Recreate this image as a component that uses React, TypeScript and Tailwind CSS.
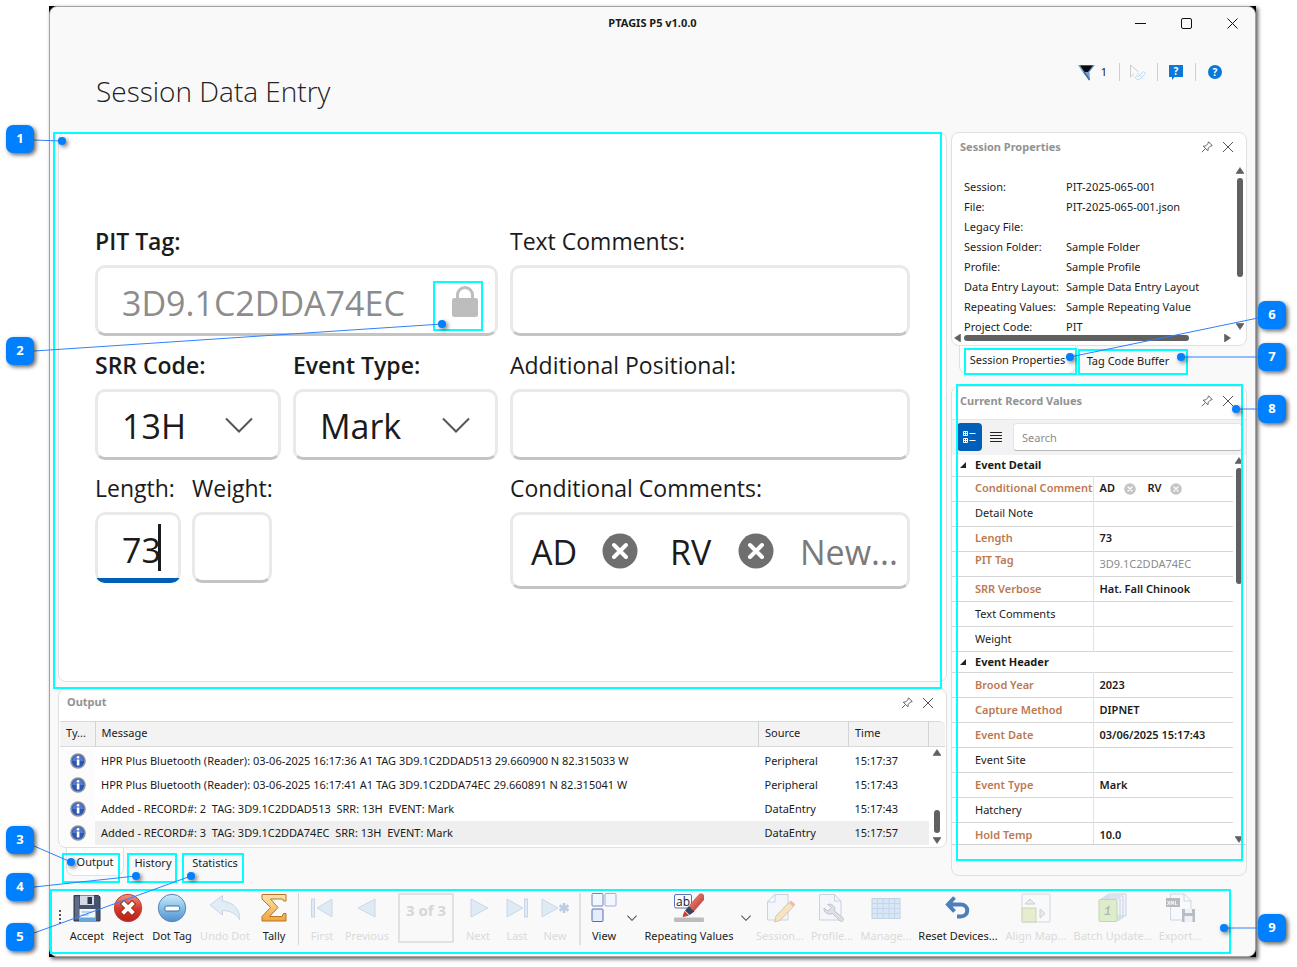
import React from 'react';
import { clsx } from 'clsx';

interface SessionProperty {
    label: string;
    value: string;
}

interface OutputRow {
    message: string;
    source: string;
    time: string;
}

interface RecordField {
    name: string;
    value?: string;
    required?: boolean;
    kind?: 'tokens' | 'locked';
}

const sessionProperties: SessionProperty[] = [
    { label: 'Session:', value: 'PIT-2025-065-001' },
    { label: 'File:', value: 'PIT-2025-065-001.json' },
    { label: 'Legacy File:', value: '' },
    { label: 'Session Folder:', value: 'Sample Folder' },
    { label: 'Profile:', value: 'Sample Profile' },
    { label: 'Data Entry Layout:', value: 'Sample Data Entry Layout' },
    { label: 'Repeating Values:', value: 'Sample Repeating Value' },
    { label: 'Project Code:', value: 'PIT' },
];

const outputRows: OutputRow[] = [
    { message: 'HPR Plus Bluetooth (Reader): 03-06-2025 16:17:36 A1 TAG 3D9.1C2DDAD513 29.660900 N 82.315033 W', source: 'Peripheral', time: '15:17:37' },
    { message: 'HPR Plus Bluetooth (Reader): 03-06-2025 16:17:41 A1 TAG 3D9.1C2DDA74EC 29.660891 N 82.315041 W', source: 'Peripheral', time: '15:17:43' },
    { message: 'Added - RECORD#: 2  TAG: 3D9.1C2DDAD513  SRR: 13H  EVENT: Mark', source: 'DataEntry', time: '15:17:43' },
    { message: 'Added - RECORD#: 3  TAG: 3D9.1C2DDA74EC  SRR: 13H  EVENT: Mark', source: 'DataEntry', time: '15:17:57' },
];

const eventDetail: RecordField[] = [
    { name: 'Conditional Comment', required: true, kind: 'tokens' },
    { name: 'Detail Note' },
    { name: 'Length', value: '73', required: true },
    { name: 'PIT Tag', value: '3D9.1C2DDA74EC', required: true, kind: 'locked' },
    { name: 'SRR Verbose', value: 'Hat. Fall Chinook', required: true },
    { name: 'Text Comments' },
    { name: 'Weight' },
];

const eventHeader: RecordField[] = [
    { name: 'Brood Year', value: '2023', required: true },
    { name: 'Capture Method', value: 'DIPNET', required: true },
    { name: 'Event Date', value: '03/06/2025 15:17:43', required: true },
    { name: 'Event Site' },
    { name: 'Event Type', value: 'Mark', required: true },
    { name: 'Hatchery' },
    { name: 'Hold Temp', value: '10.0', required: true },
];

/* ---------- small glyphs ---------- */

const PinIcon = () => (
    <svg width="12" height="12" viewBox="0 0 12 12" fill="none" stroke="#666" strokeWidth="1">
        <path d="M7.5.8l3.7 3.7-2.1.8-1.8 1.9-.4 2.6L2.3 5.200l2.600-.4 1.900-1.900zM4.400 7.600L.8 11.200" />
    </svg>
);

const CloseIcon = () => (
    <svg width="12" height="12" viewBox="0 0 12 12" fill="none" stroke="#555" strokeWidth="1">
        <path d="M1 1l10 10M11 1L1 11" />
    </svg>
);

const Triangle = ({ dir }: { dir: 'up' | 'down' | 'left' | 'right' }) => {
    const paths = {
        up: 'M4 0.500L8 6.500H0z',
        down: 'M0 .5h8L4 6.500z',
        left: 'M6.500 0v8L.5 4z',
        right: 'M.5 0v8l6-4z',
    };
    return (
        <svg width="8" height="8" viewBox="0 0 8 8" className="shrink-0">
            <path d={paths[dir]} fill="#606060" stroke="#606060" strokeWidth=".6" strokeLinejoin="round" />
        </svg>
    );
};

const ChevronDown = ({ className }: { className?: string }) => (
    <svg viewBox="0 0 28 16" className={className} fill="none" stroke="#555" strokeWidth="2">
        <path d="M1 1.500l13 13 13-13" />
    </svg>
);

const TokenRemove = ({ className, fill }: { className: string; fill: string }) => (
    <svg viewBox="0 0 36 36" className={className}>
        <circle cx="18" cy="18" r="17.500" fill={fill} />
        <path d="M12 12l12 12M24 12l-12 12" stroke="#fff" strokeWidth="4" strokeLinecap="round" />
    </svg>
);

const InfoIcon = () => (
    <svg width="16" height="16" viewBox="0 0 16 16" className="block">
        <circle cx="8" cy="8" r="7.800" fill="#8d929c" />
        <circle cx="8" cy="8" r="6.200" fill="#2c55b8" />
        <path d="M2.300 8a5.700 5.700 0 0 1 11.400 0z" fill="#5579cc" />
        <rect x="6.800" y="3" width="2.600" height="2.400" rx="1" fill="#fff" />
        <rect x="6.800" y="6.400" width="2.600" height="6.200" rx=".6" fill="#fff" />
    </svg>
);

/* ---------- toolbar icons ---------- */

const Icon = ({ children, faded }: { children: React.ReactNode; faded?: boolean }) => (
    <svg width="30" height="30" viewBox="0 0 30 30" fill="none" className={clsx('block', faded && 'opacity-40')}>
        {children}
    </svg>
);

const AcceptIcon = () => (
    <Icon>
        <path d="M2 2.500h24.500l1.500 1.500v24H2z" fill="#46536b" stroke="#2f3a50" />
        <path d="M3 3.500h4v23H3z" fill="#5f6d86" />
        <rect x="8" y="2.500" width="14" height="9.500" fill="#d4dbe6" />
        <rect x="15.500" y="4" width="4.500" height="7" fill="#2d374c" />
        <rect x="7.500" y="16" width="16" height="12" fill="#f3f8fd" />
        <path d="M7.500 24.500h16V28h-16z" fill="#64a8dc" />
        <path d="M9.500 19h10M9.500 22h7" stroke="#8fb0d0" />
    </Icon>
);

const RejectIcon = () => (
    <Icon>
        <defs>
            <linearGradient id="reject" x1="0" y1="0" x2="0" y2="1">
                <stop offset="0" stopColor="#ee9a8b" />
                <stop offset=".5" stopColor="#d83b2b" />
                <stop offset="1" stopColor="#b51f17" />
            </linearGradient>
        </defs>
        <circle cx="15" cy="15" r="13.700" fill="url(#reject)" stroke="#bd4438" />
        <path d="M11 11l8 8M19 11l-8 8" stroke="#a3281f" strokeWidth="6" strokeLinecap="square" />
        <path d="M11 11l8 8M19 11l-8 8" stroke="#fff" strokeWidth="4" strokeLinecap="square" />
    </Icon>
);

const DotTagIcon = () => (
    <Icon>
        <defs>
            <linearGradient id="dot" x1="0" y1="0" x2="0" y2="1">
                <stop offset="0" stopColor="#cfecf8" />
                <stop offset=".5" stopColor="#87c0e6" />
                <stop offset="1" stopColor="#4f8fcd" />
            </linearGradient>
        </defs>
        <circle cx="15" cy="15" r="13.700" fill="url(#dot)" stroke="#5b86b8" />
        <rect x="8" y="13" width="14.500" height="5" rx="1.500" fill="#fff" stroke="#3d70a8" />
    </Icon>
);

const UndoIcon = () => (
    <Icon faded>
        <path d="M0 12L12.500 2.500v5.500C22 9 30 15 30 27c-4-6.500-10-9.500-17.500-9.500v4.500z" fill="#bfdcf0" stroke="#7f9cc8" strokeLinejoin="round" />
    </Icon>
);

const TallyIcon = () => (
    <Icon>
        <defs>
            <linearGradient id="tally" x1="0" y1="0" x2="0" y2="1">
                <stop offset="0" stopColor="#fde3ae" />
                <stop offset="1" stopColor="#f0a63c" />
            </linearGradient>
        </defs>
        <path d="M3 1.500h24v6.500h-2.500l-1-2H11.500L19 14.500 10.500 23.500H23l1.500-3H27v7.500H3v-4.500l8.500-9L3 6z" fill="url(#tally)" stroke="#b9742a" strokeLinejoin="round" />
    </Icon>
);

const FirstIcon = () => (
    <Icon faded>
        <rect x="4.500" y="6" width="3" height="18" fill="#b8d8f0" stroke="#86a2cc" />
        <path d="M25 6v18L10 15z" fill="#b8d8f0" stroke="#86a2cc" />
    </Icon>
);

const PreviousIcon = () => (
    <Icon faded>
        <path d="M23 6v18L6 15z" fill="#b8d8f0" stroke="#86a2cc" />
    </Icon>
);

const NextIcon = () => (
    <Icon faded>
        <path d="M8 6v18l17-9z" fill="#b8d8f0" stroke="#86a2cc" />
    </Icon>
);

const LastIcon = () => (
    <Icon faded>
        <rect x="22.500" y="6" width="3" height="18" fill="#b8d8f0" stroke="#86a2cc" />
        <path d="M5 6v18l16-9z" fill="#b8d8f0" stroke="#86a2cc" />
    </Icon>
);

const NewIcon = () => (
    <Icon faded>
        <path d="M2 6v18l16-9z" fill="#b8d8f0" stroke="#86a2cc" />
        <path d="M24 10v10M19.500 12.500l9 5M28.500 12.500l-9 5" stroke="#5f8bc4" strokeWidth="2.600" />
    </Icon>
);

const ViewIcon = () => (
    <Icon>
        <rect x="3" y=".5" width="11" height="12.500" rx="1" fill="#f2f6ff" stroke="#7484b8" />
        <rect x="16" y=".5" width="11" height="12.500" rx="1" fill="#f2f6ff" stroke="#a3aed2" />
        <rect x="3" y="16" width="11" height="12.500" rx="1" fill="#e4ecff" stroke="#5a6cab" />
    </Icon>
);

const RepeatingIcon = () => (
    <Icon>
        <defs>
            <linearGradient id="marker" x1="0" y1="0" x2="1" y2="1">
                <stop offset="0" stopColor="#f59a8c" />
                <stop offset="1" stopColor="#b4211d" />
            </linearGradient>
        </defs>
        <rect x="0" y="24.500" width="30" height="4.500" rx="1" fill="#bdbdbd" />
        <rect x=".5" y="1.500" width="17" height="13.500" rx="1.500" fill="#f7faff" stroke="#5a74b4" />
        <text x="2" y="12.500" fontSize="12" fill="#222" className="font-['Open_Sans',sans-serif]">ab</text>
        <path d="M15.500 12.500L25 1.500c2.500-2.500 7.500 1.500 5 5L20 18z" fill="url(#marker)" stroke="#b33a30" strokeWidth=".5" />
        <path d="M15 13l5.500 5.500-5 3.500-4.500-4.500z" fill="#39435a" />
        <path d="M10.500 18l4.500 4.500-5.500 1.500c-1 0-1-1-.5-2z" fill="#d23c30" />
    </Icon>
);

const SessionIcon = () => (
    <Icon faded>
        <path d="M10 1.500h13V27H2.500V9z" fill="#eef3fa" stroke="#8497c2" />
        <path d="M10 1.500V9H2.500z" fill="#fff" stroke="#8497c2" />
        <path d="M11 23L24 9.500l4.500 4L15 27.500 9.500 29z" fill="#f3c36a" stroke="#a87535" />
        <path d="M24 9.500l2-2 4.500 4-2 2z" fill="#e0604f" />
    </Icon>
);

const ProfileIcon = () => (
    <Icon faded>
        <path d="M2.500 1.500h15L24 8v19H2.500z" fill="#eef3fa" stroke="#8497c2" />
        <path d="M17.500 1.500V8H24" stroke="#8497c2" />
        <path d="M10.500 11.500c4-1.500 8.500 2 7 6.500l8.500 7c1.500 2-1 4.500-3 3L15.500 20.500c-4.500 2-9-1-8.500-5.500l4 3 3.500-3.500z" fill="#b5bdc9" stroke="#6b7688" />
    </Icon>
);

const ManageIcon = () => (
    <Icon faded>
        <rect x="1" y="5.500" width="28" height="20" fill="#a9cdf0" stroke="#6f96cc" />
        <path d="M1 10.500h28M1 15.500h28M1 20.500h28M6.500 5.500v20M12 5.500v20M18 5.500v20M23.500 5.500v20" stroke="#7ba2d4" />
    </Icon>
);

const ResetIcon = () => (
    <Icon>
        <path d="M11.500 4.500L5 11.500l6.500 7M6 11.500h11.500c9 0 9 12 0 12H14" stroke="#4a80bb" strokeWidth="4" />
    </Icon>
);

const AlignIcon = () => (
    <Icon faded>
        <rect x="1" y="1" width="28" height="28" rx="1" fill="#f8fafc" stroke="#9aa5b5" />
        <rect x="1" y="15" width="14" height="14" fill="#c5dd8c" stroke="#8ca25c" />
        <path d="M9 6l5 5H4zM19 16v9l5-4.500z" fill="#d8d8d8" stroke="#8c8c8c" />
    </Icon>
);

const BatchIcon = () => (
    <Icon faded>
        <path d="M10 1h18v22H10zM7 3h18v22H7zM4 5h18v22H4z" fill="#e6eefc" stroke="#7e98c8" />
        <rect x="1" y="6.500" width="18" height="22" rx="1" fill="#b5dc84" stroke="#73a048" />
        <text x="6" y="22" fontSize="12" fontStyle="italic" fontWeight="700" fill="#4c5a44" className="font-['Liberation_Mono',monospace]">1</text>
    </Icon>
);

const ExportIcon = () => (
    <Icon faded>
        <path d="M5.500 1h14L26 7.500V27H5.500z" fill="#f7faff" stroke="#8fa0c8" />
        <path d="M19 1v7h7" stroke="#8fa0c8" />
        <rect x="1" y="5" width="14" height="9" fill="#555d68" />
        <text x="2" y="12" fontSize="6" fontWeight="700" fill="#fff" className="font-['Liberation_Mono',monospace]">XML</text>
        <path d="M17 16h13v13H17z" fill="#56647d" />
        <path d="M20 16h7v4h-7zM19.500 23h8v6h-8z" fill="#dfe8f3" />
    </Icon>
);

/* ---------- shared pieces ---------- */

const PanelHeader = ({ title }: { title: string }) => (
    <div className="flex h-8 shrink-0 items-center justify-between pb-1 pl-2 pr-3">
        <h2 className="text-[11px] font-bold text-[#929292]">{title}</h2>
        <div className="flex items-center gap-[9px]">
            <button type="button" aria-label={`Pin ${title}`}><PinIcon /></button>
            <button type="button" aria-label={`Close ${title}`}><CloseIcon /></button>
        </div>
    </div>
);

const fieldBox = 'h-[71px] w-full rounded-[10px] border-[3px] border-[#e9e9e9] border-b-[#c4c4c4] bg-white pt-1';
const labelText = 'block h-8 text-[23px] leading-8 whitespace-nowrap mb-2';

const SelectField = ({ id, label, value }: { id: string; label: string; value: string }) => (
    <div>
        <label htmlFor={id} className={clsx(labelText, 'font-semibold')}>{label}</label>
        <div className="relative">
            <select id={id} defaultValue={value} className={clsx(fieldBox, 'appearance-none pl-6 text-[34px] outline-none')}>
                <option>{value}</option>
            </select>
            <ChevronDown className="pointer-events-none absolute right-7 top-7 h-4 w-7" />
        </div>
    </div>
);

interface ToolButtonProps {
    label: string;
    icon: React.ReactNode;
    width: string;
    disabled?: boolean;
}

const ToolButton = ({ label, icon, width, disabled }: ToolButtonProps) => (
    <button
        type="button"
        disabled={disabled}
        className={clsx('flex shrink-0 flex-col items-center gap-[5px] text-[11px] leading-4 whitespace-nowrap', width, disabled ? 'text-[#dadada]' : 'text-[#1b1b1b]')}
    >
        {icon}
        <span className="-mx-4">{label}</span>
    </button>
);

const DropButton = ({ label }: { label: string }) => (
    <button type="button" aria-label={label} className="flex w-5 shrink-0 items-start justify-center pt-[22px]">
        <ChevronDown className="h-[6px] w-[10px] [stroke-width:3]" />
    </button>
);

const Tab = ({ label, active, width }: { label: string; active?: boolean; width: string }) => (
    <button
        type="button"
        role="tab"
        aria-selected={!!active}
        className={clsx('h-7 pt-[2px] text-center text-[11px] whitespace-nowrap', width, active && 'rounded-b-lg border border-t-0 border-[#e0e0e0] bg-white')}
    >
        {label}
    </button>
);

/* ---------- panels ---------- */

const TitleBar = () => (
    <div className="flex h-8 items-center">
        <div className="w-[138px]" />
        <div className="flex-1 text-center text-[11px] font-bold">PTAGIS P5 v1.0.0</div>
        <button type="button" aria-label="Minimize" className="flex h-8 w-[46px] items-center justify-center">
            <svg width="11" height="11" stroke="#111"><path d="M0 5.500h11" /></svg>
        </button>
        <button type="button" aria-label="Maximize" className="flex h-8 w-[46px] items-center justify-center">
            <svg width="11" height="11" stroke="#111" fill="none"><rect x=".5" y=".5" width="10" height="10" rx="1.500" /></svg>
        </button>
        <button type="button" aria-label="Close" className="flex h-8 w-[46px] items-center justify-center">
            <svg width="11" height="11" stroke="#111"><path d="M.5.5l10 10M10.500.5l-10 10" /></svg>
        </button>
    </div>
);

const PageHeader = () => (
    <header className="flex h-[93px] items-start justify-between pl-[46px] pr-[33px] pt-6">
        <h1 className="pt-2 text-[28px] leading-10 font-light text-[#222] font-['Open_Sans',sans-serif]">Session Data Entry</h1>
        <div className="flex h-[18px] items-center">
            <button type="button" className="flex items-center gap-[6px] text-[11px]">
                <svg width="17" height="17" viewBox="0 0 17 17">
                    <path d="M0 1h17l-5.500 7 .5 8.500L5 8.500z" fill="#6ca0d4" />
                    <path d="M2 1.500h13L10 8H6.500z" fill="#0a0a12" />
                    <path d="M6 8l5.500 8" stroke="#46698e" strokeWidth="1.500" />
                </svg>
                <span>1</span>
            </button>
            <span className="ml-3 mr-[10px] h-[18px] w-px bg-[#cfcfcf]" />
            <button type="button" disabled aria-label="Design">
                <svg width="16" height="17" viewBox="0 0 16 17" fill="none" stroke="#cdcdcd">
                    <path d="M.5 1v12l3.500-3M.5 1l8 7" />
                    <path d="M5 13.500c1.500-2 2-2 3.500-1l5-5 2 2-5 5c-1.500 1.500-4 1.500-5.500-1zM7 9l6 6" stroke="#c3d5e9" />
                </svg>
            </button>
            <span className="mx-[11px] h-[18px] w-px bg-[#cfcfcf]" />
            <button type="button" aria-label="Feedback">
                <svg width="14" height="15" viewBox="0 0 14 15">
                    <path d="M0 0h14v12H5.500L3 15v-3H0z" fill="#0a78d6" />
                    <text x="7" y="10" textAnchor="middle" fontSize="10" fontWeight="700" fill="#fff">?</text>
                </svg>
            </button>
            <span className="mx-3 h-[18px] w-px bg-[#cfcfcf]" />
            <button type="button" aria-label="Help">
                <svg width="14" height="14" viewBox="0 0 14 14">
                    <circle cx="7" cy="7" r="7" fill="#0a78d6" />
                    <text x="7" y="10.500" textAnchor="middle" fontSize="10" fontWeight="700" fill="#fff">?</text>
                </svg>
            </button>
        </div>
    </header>
);

const EntryForm = () => (
    <section className="flex-1 rounded-lg border border-[#e0e0e0] bg-white pl-9 pr-9 pt-[92px] font-['Open_Sans',sans-serif]">
        <form className="grid grid-cols-[403fr_400fr] gap-x-3 gap-y-3">
            <div>
                <label htmlFor="pit" className={clsx(labelText, 'font-semibold')}>PIT Tag:</label>
                <div className="relative">
                    <input id="pit" readOnly defaultValue="3D9.1C2DDA74EC" className={clsx(fieldBox, 'pl-6 text-[34px] text-[#8c8c8c]')} />
                    <svg viewBox="0 0 26 32" className="absolute right-5 top-[21px] h-8 w-[26px]">
                        <path d="M5.500 13V9a7.500 7.500 0 0 1 15 0v4" fill="none" stroke="#bdbdbd" strokeWidth="3" />
                        <rect x="0" y="12" width="26" height="19" rx="2.500" fill="#bdbdbd" />
                    </svg>
                </div>
            </div>
            <div>
                <label htmlFor="text-comments" className={labelText}>Text Comments:</label>
                <input id="text-comments" className={clsx(fieldBox, 'px-6 text-[34px]')} />
            </div>
            <div className="grid grid-cols-[186fr_205fr] gap-3 pt-px">
                <SelectField id="srr" label="SRR Code:" value="13H" />
                <SelectField id="event-type" label="Event Type:" value="Mark" />
            </div>
            <div className="pt-px">
                <label htmlFor="positional" className={labelText}>Additional Positional:</label>
                <input id="positional" className={clsx(fieldBox, 'px-6 text-[34px]')} />
            </div>
            <div className="flex gap-[11px]">
                <div className="w-[86px]">
                    <label htmlFor="length" className={labelText}>Length:</label>
                    <div className="relative overflow-hidden rounded-[10px]">
                        <input id="length" defaultValue="73" className={clsx(fieldBox, 'block pl-6 text-[34px] outline-none')} />
                        <span className="absolute inset-x-0 bottom-0 h-[5px] bg-[#0060b9]" />
                        <span className="absolute left-[63px] top-3 h-[47px] w-[3px] bg-[#1b1b1b]" />
                    </div>
                </div>
                <div className="w-20">
                    <label htmlFor="weight" className={labelText}>Weight:</label>
                    <input id="weight" className={clsx(fieldBox, 'px-4 text-[34px]')} />
                </div>
            </div>
            <div>
                <label htmlFor="conditional" className={labelText}>Conditional Comments:</label>
                <div className="flex h-[77px] items-center rounded-[10px] border-[3px] border-[#e9e9e9] border-b-[#c4c4c4] pl-[18px] text-[34px]">
                    <span className="w-[71px] pt-1">AD</span>
                    <button type="button" aria-label="Remove AD"><TokenRemove className="size-9" fill="#6f6f6f" /></button>
                    <span className="ml-8 w-[68px] pt-1">RV</span>
                    <button type="button" aria-label="Remove RV"><TokenRemove className="size-9" fill="#6f6f6f" /></button>
                    <input id="conditional" placeholder="New..." className="ml-[26px] w-full min-w-0 flex-1 pt-1 outline-none placeholder:text-[#7a7a7a]" />
                </div>
            </div>
        </form>
    </section>
);

const OutputPanel = () => (
    <div className="mt-[6px]">
        <section className="rounded-lg border border-[#e0e0e0] bg-white">
            <PanelHeader title="Output" />
            <div className="mx-px flex pb-[2px]">
                <table className="flex-1 table-fixed text-left text-[11px]">
                    <colgroup>
                        <col className="w-[35px]" />
                        <col />
                        <col className="w-[90px]" />
                        <col className="w-20" />
                    </colgroup>
                    <thead>
                        <tr className="h-[25px] border-y border-[#dadada] bg-[#f3f3f3]">
                            <th className="border-r border-[#d4d4d4] pl-[6px] font-normal">Ty...</th>
                            <th className="border-r border-[#d4d4d4] pl-[6px] font-normal">Message</th>
                            <th className="border-r border-[#d4d4d4] pl-[6px] font-normal">Source</th>
                            <th className="border-r border-[#d4d4d4] pl-[6px] font-normal">Time</th>
                        </tr>
                    </thead>
                    <tbody>
                        <tr className="h-[3px]"><td colSpan={4} /></tr>
                        {outputRows.map((row, index) => (
                            <tr key={row.message} className={clsx('h-6', index === 3 && 'bg-[#efefef]')}>
                                <td className="bg-[#fcfcfc] pl-[10px]"><InfoIcon /></td>
                                <td className="pl-[6px] whitespace-pre">{row.message}</td>
                                <td className="pl-[6px]">{row.source}</td>
                                <td className="pl-[6px]">{row.time}</td>
                            </tr>
                        ))}
                    </tbody>
                </table>
                <div className="flex w-4 flex-col">
                    <div className="h-[26px] rounded-tr-md border-y border-[#dadada] bg-[#f3f3f3]" />
                    <div className="flex flex-1 flex-col items-center justify-between pt-[2px]">
                        <Triangle dir="up" />
                        <div className="mt-auto mb-1 h-[23px] w-[6px] rounded-full bg-[#606060]" />
                        <Triangle dir="down" />
                    </div>
                </div>
            </div>
        </section>
        <div role="tablist" className="flex pl-2">
            <Tab label="Output" active width="w-[58px]" />
            <Tab label="History" width="w-[58px]" />
            <Tab label="Statistics" width="w-[66px]" />
        </div>
    </div>
);

const SessionPropertiesPanel = () => (
    <div>
        <section className="flex h-[214px] flex-col rounded-lg border border-[#e0e0e0] bg-white">
            <PanelHeader title="Session Properties" />
            <div className="flex min-h-0 flex-1">
                <div className="min-w-0 flex-1 pl-3 pt-3">
                    <dl>
                        {sessionProperties.map((item) => (
                            <div key={item.label} className="flex h-5 text-[11px] leading-5 whitespace-nowrap">
                                <dt className="w-[102px] shrink-0">{item.label}</dt>
                                <dd>{item.value}</dd>
                            </div>
                        ))}
                    </dl>
                </div>
                <div className="flex w-3 flex-col items-center pt-[2px]">
                    <Triangle dir="up" />
                    <div className="mt-[3px] h-[99px] w-[6px] rounded-full bg-[#606060]" />
                    <div className="mt-auto"><Triangle dir="down" /></div>
                </div>
            </div>
            <div className="flex h-[14px] shrink-0 items-center pl-[2px] pr-[14px]">
                <Triangle dir="left" />
                <div className="ml-[2px] h-[6px] w-[225px] rounded-full bg-[#606060]" />
                <div className="ml-auto"><Triangle dir="right" /></div>
            </div>
        </section>
        <div role="tablist" className="flex pl-2">
            <Tab label="Session Properties" active width="w-[117px]" />
            <Tab label="Tag Code Buffer" width="w-[104px]" />
        </div>
    </div>
);

const RecordGroup = ({ title, fields }: { title: string; fields: RecordField[] }) => (
    <tbody>
        <tr className="h-[21px] border-b border-[#d6d6d6]">
            <th colSpan={2} className="pl-2 font-bold">
                <span className="flex items-center gap-[9px]">
                    <svg width="6" height="6"><path d="M6 0v6H0z" fill="#222" /></svg>
                    {title}
                </span>
            </th>
        </tr>
        {fields.map((field) => (
            <tr key={field.name} className="h-[25px] border-b border-[#d6d6d6]">
                <th className={clsx('border-r border-[#e2e2e2] pl-[23px] whitespace-nowrap', field.required ? 'font-semibold text-[#bd7850]' : 'font-normal', field.kind === 'locked' && 'pb-2')}>
                    {field.name}
                </th>
                <td className={clsx('pl-[6px] whitespace-nowrap', field.kind === 'locked' ? 'text-[#8c8c8c]' : 'font-semibold')}>
                    {field.kind === 'tokens' ? (
                        <span className="flex items-center">
                            <span className="w-6">AD</span>
                            <button type="button" aria-label="Remove AD"><TokenRemove className="size-3" fill="#c4c4c4" /></button>
                            <span className="ml-3 w-[22px]">RV</span>
                            <button type="button" aria-label="Remove RV"><TokenRemove className="size-3" fill="#c4c4c4" /></button>
                        </span>
                    ) : field.value}
                </td>
            </tr>
        ))}
    </tbody>
);

const RecordValuesPanel = () => (
    <section className="mt-3 flex-1 overflow-hidden rounded-lg border border-[#e0e0e0] bg-[#f9f9f9] pb-[30px]">
        <div className="bg-white"><PanelHeader title="Current Record Values" /></div>
        <div className="flex h-9 items-center border-t border-[#e6e6e6] bg-[#f2f2f2] pb-px pl-[5px] pr-1">
            <button type="button" aria-label="Categorized" className="flex h-7 w-[25px] items-center justify-center rounded bg-[#0060b9]">
                <svg width="13" height="13" stroke="#fff" fill="none">
                    <path d="M.5.5h4v4h-4zM.5 7.500h4v4h-4zM2.500 0v5M0 2.500h5M2.500 7v5M0 9.500h5M6.500 2.500h6M6.500 9.500h6" />
                </svg>
            </button>
            <button type="button" aria-label="Alphabetical" className="flex h-7 w-7 items-center justify-center">
                <svg width="12" height="11" stroke="#222"><path d="M0 .5h12M0 3.500h12M0 6.500h12M0 9.500h12" /></svg>
            </button>
            <input aria-label="Search" placeholder="Search" className="ml-[3px] h-7 min-w-0 flex-1 rounded border border-[#e4e4e4] border-b-[#b8b8b8] bg-white px-2 text-[11px] placeholder:text-[#8c8c8c]" />
        </div>
        <div className="flex h-[390px] overflow-hidden border-b border-[#d0d0d0] bg-white">
            <div className="min-w-0 flex-1">
                <table className="w-full table-fixed text-left text-[11px]">
                    <colgroup>
                        <col className="w-[141px]" />
                        <col />
                    </colgroup>
                    <RecordGroup title="Event Detail" fields={eventDetail} />
                    <RecordGroup title="Event Header" fields={eventHeader} />
                </table>
            </div>
            <div className="flex w-[13px] flex-col items-center pt-[2px] pr-px">
                <Triangle dir="up" />
                <div className="mt-[3px] h-[116px] w-[6px] rounded-full bg-[#606060]" />
                <div className="mt-auto"><Triangle dir="down" /></div>
            </div>
        </div>
    </section>
);

const BottomToolbar = () => (
    <div role="toolbar" className="flex h-[67px] shrink-0 items-start pt-1">
        <div className="mt-[17px] ml-[9px] mr-1 flex w-[3px] flex-col gap-[2px]">
            {[0, 1, 2, 3].map((dot) => <span key={dot} className="size-[2px] bg-[#555]" />)}
        </div>
        <ToolButton label="Accept" icon={<AcceptIcon />} width="w-[42px]" />
        <ToolButton label="Reject" icon={<RejectIcon />} width="w-10" />
        <ToolButton label="Dot Tag" icon={<DotTagIcon />} width="w-12" />
        <ToolButton label="Undo Dot" icon={<UndoIcon />} width="w-[58px]" disabled />
        <ToolButton label="Tally" icon={<TallyIcon />} width="w-10" />
        <span className="mx-1 h-[52px] w-px bg-[#d6d6d6]" />
        <ToolButton label="First" icon={<FirstIcon />} width="w-[38px]" disabled />
        <ToolButton label="Previous" icon={<PreviousIcon />} width="w-[52px]" disabled />
        <input aria-label="Record position" disabled defaultValue="3 of 3" className="ml-[5px] mr-1 h-[50px] w-[56px] border-2 border-[#e2e2e2] pb-4 text-center text-[15px] font-bold text-[#d6d6d6]" />
        <ToolButton label="Next" icon={<NextIcon />} width="w-10" disabled />
        <ToolButton label="Last" icon={<LastIcon />} width="w-[38px]" disabled />
        <ToolButton label="New" icon={<NewIcon />} width="w-[38px]" disabled />
        <span className="mx-[5px] h-[52px] w-[2px] bg-[#e0e0e0]" />
        <ToolButton label="View" icon={<ViewIcon />} width="w-9" />
        <DropButton label="View options" />
        <ToolButton label="Repeating Values" icon={<RepeatingIcon />} width="w-[94px]" />
        <DropButton label="Repeating values options" />
        <ToolButton label="Session..." icon={<SessionIcon />} width="w-12" disabled />
        <ToolButton label="Profile..." icon={<ProfileIcon />} width="w-14" disabled />
        <ToolButton label="Manage..." icon={<ManageIcon />} width="w-[52px]" disabled />
        <ToolButton label="Reset Devices..." icon={<ResetIcon />} width="w-[92px]" />
        <ToolButton label="Align Map..." icon={<AlignIcon />} width="w-16" disabled />
        <ToolButton label="Batch Update..." icon={<BatchIcon />} width="w-[90px]" disabled />
        <ToolButton label="Export..." icon={<ExportIcon />} width="w-11" disabled />
    </div>
);

/* ---------- help callouts laid over the window ---------- */

const highlights = [
    'left-[53px] top-[132px] w-[889px] h-[557px]',
    'left-[433px] top-[281px] w-[50px] h-[50px]',
    'left-[62px] top-[853px] w-[58px] h-[30px]',
    'left-[127px] top-[853px] w-[50px] h-[30px]',
    'left-[182px] top-[853px] w-[62px] h-[30px]',
    'left-[964px] top-[348px] w-[113px] h-[27px]',
    'left-[1078px] top-[349px] w-[110px] h-[26px]',
    'left-[956px] top-[384px] w-[287px] h-[477px]',
    'left-[50px] top-[889px] w-[1181px] h-[65px]',
];

const callouts = [
    { id: 1, place: 'left-[6px] top-[125px]', from: [34, 140], to: [62, 141] },
    { id: 2, place: 'left-[6px] top-[337px]', from: [34, 351], to: [442, 324] },
    { id: 3, place: 'left-[6px] top-[826px]', from: [34, 846], to: [71, 862] },
    { id: 4, place: 'left-[6px] top-[873px]', from: [34, 887], to: [136, 876] },
    { id: 5, place: 'left-[6px] top-[923px]', from: [34, 933], to: [191, 876] },
    { id: 6, place: 'left-[1258px] top-[301px]', from: [1258, 318], to: [1070, 357] },
    { id: 7, place: 'left-[1258px] top-[343px]', from: [1258, 357], to: [1181, 357] },
    { id: 8, place: 'left-[1258px] top-[395px]', from: [1258, 409], to: [1236, 409] },
    { id: 9, place: 'left-[1258px] top-[914px]', from: [1258, 928], to: [1224, 928] },
];

const Callouts = () => (
    <div className="pointer-events-none absolute inset-0 overflow-hidden">
        {highlights.map((box) => (
            <div key={box} className={clsx('absolute border-2 border-[#00ffff]', box)} />
        ))}
        <svg className="absolute inset-0 h-full w-full">
            {callouts.map(({ id, from, to }) => (
                <g key={id}>
                    <line x1={from[0]} y1={from[1]} x2={to[0]} y2={to[1]} stroke="#2f80ff" />
                    <circle cx={to[0]} cy={to[1]} r="4" fill="#0080ff" className="drop-shadow-[2px_2px_2px_rgba(0,0,0,0.5)]" />
                </g>
            ))}
        </svg>
        {callouts.map(({ id, place }) => (
            <div key={id} className={clsx('absolute flex size-7 items-center justify-center rounded-[7px] bg-[#0080ff] text-[13px] font-bold text-white shadow-[2px_2px_4px_rgba(0,0,0,0.6)]', place)}>
                {id}
            </div>
        ))}
    </div>
);

export default function App() {
    return (
        <div className="relative flex min-h-screen bg-white pb-[10px] pl-[49px] pr-[41px] pt-[6px] font-['Noto_Sans','Open_Sans',sans-serif] text-[#1b1b1b]">
            <div className="flex min-w-0 flex-1 bg-black shadow-[2px_2px_4px_rgba(0,0,0,0.65)]">
                <div className="flex min-w-0 flex-1 flex-col rounded-lg border border-[#a4a4a4] bg-[#f9f9f9]">
                    <TitleBar />
                    <PageHeader />
                    <main className="flex flex-1 gap-1 pb-[13px] pl-2 pr-2">
                        <div className="flex min-w-0 flex-1 flex-col">
                            <EntryForm />
                            <OutputPanel />
                        </div>
                        <div className="flex w-[296px] shrink-0 flex-col">
                            <SessionPropertiesPanel />
                            <RecordValuesPanel />
                        </div>
                    </main>
                    <BottomToolbar />
                </div>
            </div>
            <Callouts />
        </div>
    );
}
